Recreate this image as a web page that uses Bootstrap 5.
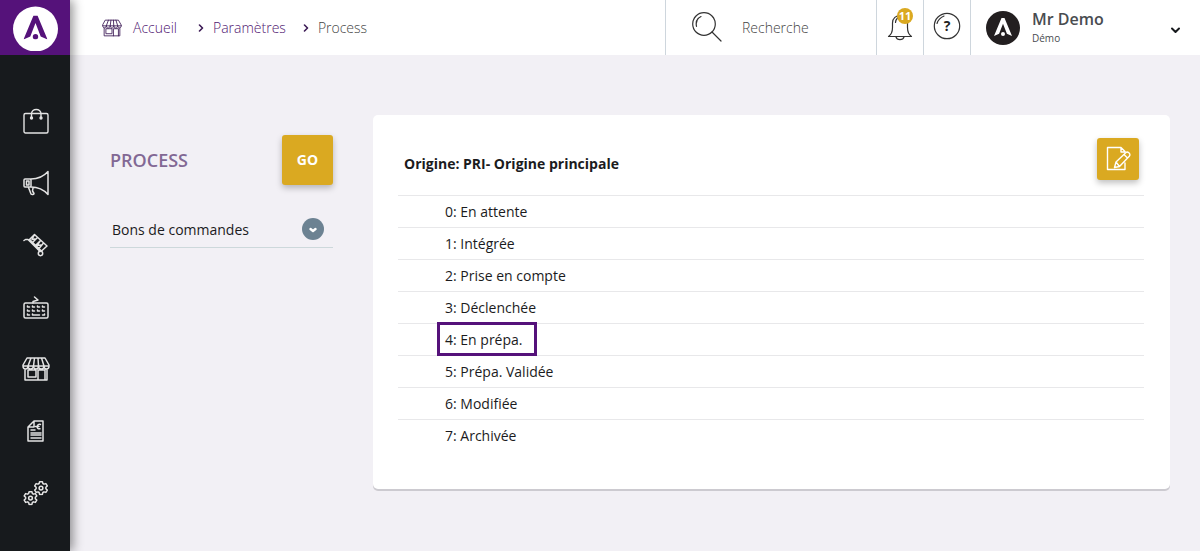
<!DOCTYPE html>
<html lang="fr">
<head>
<meta charset="utf-8">
<meta name="viewport" content="width=device-width, initial-scale=1">
<title>Process</title>
<link rel="stylesheet" href="https://cdn.jsdelivr.net/npm/bootstrap@5.3.0/dist/css/bootstrap.min.css">
<style>
  :root { --violet: #55127a; --gold: #daa921; --ink: #171a1d; --rule: #ced6dd; }
  body { font-family: "Open Sans", sans-serif; font-size: 14px; line-height: 20px; color: #1b1b1d; background: #f2f0f5; }
  svg { display: block; fill: none; stroke: currentColor; stroke-linejoin: round; stroke-linecap: round; }
  .sidebar { width: 70px; background: var(--ink); box-shadow: 3px 0 10px rgba(0,0,0,.42); z-index: 2; }
  .logo { height: 55px; background: var(--violet); color: var(--violet); }
  .menu { padding: 35px 0 0 1px; }
  .menu a { height: 62px; color: #e4e4e4; }
  .topbar { min-height: 55px; }
  .crumbs { padding-left: 32px; font-weight: 300; }
  .crumbs a { color: #4f1670; gap: 11px; }
  .crumbs svg { color: #3c1a55; }
  .crumbs .chevron { margin: 0 8px 0 20px; }
  .crumbs .chevron + .here { margin-left: -2px; }
  .crumbs .here { color: #444; }
  .searchbox { width: 211px; border-left: 1px solid var(--rule); padding-left: 24px; gap: 20px; }
  .searchbox input { font-weight: 300; color: #444; width: 100px; background: none; }
  .searchbox input::placeholder { color: #444; opacity: 1; }
  .tool { width: 47px; border: 0; border-left: 1px solid var(--rule); background: none; color: #333; padding: 0 0 4px; }
  .tally { font-size: 11px; line-height: 16px; width: 16px; height: 16px; background: var(--gold); top: 8px; left: 20px; }
  .profile { width: 230px; border: 0; border-left: 1px solid var(--rule); background: none; padding: 0 19px 0 15px; color: #494c50; }
  .profile strong { font-size: 16px; line-height: 20px; font-weight: 600; }
  .profile small { font-size: 10px; line-height: 18px; }
  .content { padding: 60px 30px 60px 40px; gap: 40px; }
  .filters { width: 223px; padding-top: 20px; }
  h1 { font-size: 18px; line-height: 24px; font-weight: 600; color: #826894; }
  .gold { background: var(--gold); color: #fff; border: 0; border-radius: 3px; box-shadow: 0 3px 6px rgba(0,0,0,.25); }
  .go { width: 51px; height: 50px; font-weight: 700; }
  .edit { width: 42px; height: 42px; padding: 0; }
  .choice { margin-top: 26px; }
  .choice select { height: 37px; width: 100%; appearance: none; border: 0; border-bottom: 1px solid #cdd8db; border-radius: 0; background: none; padding: 2px 36px 0 2px; color: inherit; }
  .choice svg { right: 9px; top: 7px; pointer-events: none; }
  .panel { border-radius: 5px; padding: 0 26px 38px 25px; box-shadow: 0 2px 0 #cccad0; min-width: 0; }
  .panel header { min-height: 80px; padding: 8px 5px 0 6px; }
  h2 { font-size: 14px; line-height: 20px; font-weight: 700; padding-top: 10px; }
  .states li { border-top: 1px solid #e8e8ea; height: 32px; padding: 6px 0 5px 47px; line-height: 20px; }
  .marker { border: 3px solid var(--violet); inset: -8px -14px -6px -8px; pointer-events: none; }
</style>
</head>
<body>
<svg width="0" height="0" class="position-absolute" aria-hidden="true">
  <symbol id="shop" viewBox="0 0 28 24">
    <path d="M5 1h18l4 7v1H1V8zM1 9c0 4 5 4 5 0 0 4 5 4 5.500 0 0 4 5 4 5 0 0 4 5.500 4 5.500 0 0 4 5 4 5 0M9 1 6 9M12.500 1l-1 8M16 1l.5 8M19.500 1 22 9M3 12v11h22V12M6 13h8v7H6zM16 23V13h7v10"/>
  </symbol>
  <symbol id="mark" viewBox="0 0 24 24">
    <path d="M10 0h4l10 24-6.800-3L12 7.500 6.800 21 0 24z" fill="currentColor" stroke="none"/>
    <circle cx="12" cy="21.300" r="2.700" fill="currentColor" stroke="none"/>
  </symbol>
  <symbol id="gear" viewBox="0 0 16 16">
    <path d="M6.500 1.200h3l.5 2 1.200.7 2-.6 1.500 2.500-1.500 1.500v1.400l1.500 1.500-1.500 2.500-2-.6-1.200.7-.5 2h-3l-.5-2-1.200-.7-2 .6-1.500-2.500 1.500-1.500V7.300L1.300 5.800l1.500-2.500 2 .6L6 3.200z"/><circle cx="8" cy="8" r="2"/>
  </symbol>
</svg>

<div class="d-flex min-vh-100">
  <nav class="sidebar flex-shrink-0 position-relative" aria-label="Menu principal">
    <a href="#" class="logo d-flex align-items-center justify-content-center" aria-label="Accueil">
      <svg width="46" height="46" viewBox="0 0 46 46"><circle cx="23.500" cy="24" r="22.500" fill="#fff" stroke="none"/><use href="#mark" x="11.500" y="10.500" width="24" height="24"/></svg>
    </a>
    <div class="menu d-flex flex-column">
      <a href="#" class="d-flex align-items-center justify-content-center" aria-label="Commandes">
        <svg width="26" height="26" viewBox="0 0 26 26" stroke-width="1.400"><rect x="1" y="5.500" width="24" height="19.500" rx="1.500"/><path d="M8.500 10V6c0-6 9.500-6 9.500 0v4"/><circle cx="8.500" cy="10" r="1" fill="currentColor"/><circle cx="18" cy="10" r="1" fill="currentColor"/></svg>
      </a>
      <a href="#" class="d-flex align-items-center justify-content-center" aria-label="Marketing">
        <svg width="28" height="26" viewBox="0 0 28 26" stroke-width="1.500"><rect x="2" y="9" width="7" height="8" rx="1"/><path d="M4.500 11h2.500v4H4.500zM9 9c7 0 13-3 17-7.500v23C22 20 16 17 9 17M6.500 17.500 9 24c1 1 3 .5 3-.5L10.500 21l.5-3"/></svg>
      </a>
      <a href="#" class="d-flex align-items-center justify-content-center" aria-label="Livraisons">
        <svg width="26" height="24" viewBox="0 0 26 24" stroke-width="1.500"><path d="M1 7.500 2.500 6.500H5L17 18.500M11.500 1.500 24 13l-5.500 5L6.500 6.500zM9.500 9.500l5-5M12.500 12.500l5-5M11.500 1.500 9 6.500l3-.5M17.500 7.500l-3.500 5 4-.5M20.500 10 16 15.500"/><circle cx="17.500" cy="20.500" r="2.200"/></svg>
      </a>
      <a href="#" class="d-flex align-items-center justify-content-center" aria-label="Saisie">
        <svg width="26" height="24" viewBox="0 0 26 24" stroke-width="1.500"><rect x="1" y="8" width="24" height="15" rx="1.500"/><path d="M10 8V6.500l5-1.500-3.500-3M4.500 11v1h2M9.500 11v1h2M14.500 11v1h2M19.500 11v1h2M4.500 15v1h2M9.500 15v1h2M14.500 15v1h2M19.500 15v1h2M4.500 19v1h2M9.500 19v1h7M19.500 20h2v-1"/></svg>
      </a>
      <a href="#" class="d-flex align-items-center justify-content-center" aria-label="Boutique">
        <svg width="28" height="24" stroke-width="1.500"><use href="#shop"/></svg>
      </a>
      <a href="#" class="d-flex align-items-center justify-content-center" aria-label="Factures">
        <svg width="18" height="22" viewBox="0 0 18 22" stroke-width="1.500"><path d="M7 1h9v20H1V7zM7 1v6H1M13.500 4.500c-3.500-1.500-5 5-.5 4.300M8.500 6.500H12M4 10h4M4 13h10M4 15h10M4 18h10"/></svg>
      </a>
      <a href="#" class="d-flex align-items-center justify-content-center" aria-label="Réglages">
        <svg width="26" height="26" viewBox="0 0 26 26" stroke-width="1.600"><use href="#gear" x="0" y="10.500" width="15" height="15"/><use href="#gear" x="10.500" y="0.500" width="15" height="15"/></svg>
      </a>
    </div>
  </nav>

  <div class="flex-grow-1 d-flex flex-column overflow-hidden">
    <header class="topbar bg-white d-flex align-items-stretch">
      <nav class="crumbs d-flex align-items-center me-auto" aria-label="Fil d’Ariane">
        <a href="#" class="text-decoration-none d-flex align-items-center"><svg width="20" height="18" stroke-width="1.200"><use href="#shop"/></svg>Accueil</a>
        <svg class="chevron" width="8" height="8" viewBox="0 0 8 8" stroke-width="1.600"><path d="m2.500 1 3 3-3 3"/></svg>
        <a href="#" class="text-decoration-none">Paramètres</a>
        <svg class="chevron ms-3" width="8" height="8" viewBox="0 0 8 8" stroke-width="1.600"><path d="m2.500 1 3 3-3 3"/></svg>
        <span class="here ms-0">Process</span>
      </nav>
      <form class="searchbox d-flex align-items-center">
        <label for="q" aria-label="Recherche"><svg width="32" height="32" viewBox="0 0 32 32" stroke-width="1.200" color="#333"><circle cx="14" cy="12" r="11.300"/><path d="m22 20 9 9M6.500 14.500C5.500 9.500 7.500 6 11 4.500"/></svg></label>
        <input id="q" type="text" class="border-0 p-0" placeholder="Recherche">
      </form>
      <button type="button" class="tool position-relative" aria-label="Notifications">
        <svg class="mx-auto" width="26" height="30" viewBox="0 0 26 30" stroke-width="1.200"><path d="M1.500 25.500c3-2 4-4.500 4-9V12c0-10 15-10 15 0v4.500c0 4.500 1 7 4 9zM9 26c1 3.500 7 3.500 8 0M8.500 11.500c0-2 .5-3 2-4.500"/></svg>
        <span class="tally position-absolute rounded-circle text-white fw-bold text-center">11</span>
      </button>
      <button type="button" class="tool" aria-label="Aide">
        <svg class="mx-auto" width="28" height="28" viewBox="0 0 28 28" stroke-width="1.200"><circle cx="14" cy="14" r="12.700"/><path d="M4 11.500c1-3.500 3.500-6 7-7.500"/><text x="14" y="19" text-anchor="middle" font-size="14" font-weight="700" fill="#222" stroke="none">?</text></svg>
      </button>
      <button type="button" class="profile d-flex align-items-center text-start">
        <svg width="34" height="34" viewBox="0 0 34 34" color="#fff"><circle cx="17" cy="17" r="17" fill="#231f20" stroke="none"/><use href="#mark" x="8" y="7" width="18" height="18"/></svg>
        <span class="d-flex flex-column flex-grow-1 ms-2 ps-1"><strong>Mr Demo</strong><small>Démo</small></span>
        <svg class="mt-1" width="12" height="8" viewBox="0 0 12 8" stroke-width="2" color="#171a1d"><path d="m3 2.500 3.500 3.500L10 2.500"/></svg>
      </button>
    </header>

    <main class="content d-flex flex-column flex-md-row align-items-start">
      <form class="filters flex-shrink-0">
        <div class="d-flex align-items-center justify-content-between">
          <h1 class="m-0">PROCESS</h1>
          <button type="button" class="gold go">GO</button>
        </div>
        <div class="choice position-relative">
          <select aria-label="Type de document"><option>Bons de commandes</option></select>
          <svg class="position-absolute" width="22" height="22" viewBox="0 0 22 22"><circle cx="11" cy="11" r="11" fill="#6c8292" stroke="none"/><path d="m8.500 11 2.500 2 2.500-2" stroke="#fff" stroke-width="2.400"/></svg>
        </div>
      </form>

      <section class="panel bg-white flex-grow-1">
        <header class="d-flex align-items-center justify-content-between">
          <h2 class="m-0">Origine: PRI- Origine principale</h2>
          <button type="button" class="gold edit" aria-label="Modifier">
            <svg class="mx-auto" width="26" height="26" viewBox="0 0 26 26" stroke-width="1.400"><path d="M20 17v6.500H2.500V1.500H16l4 4M16 1.500v4.500h3.500M9.500 21.500l1.500-5.500L21 6.500c1.500-1.500 5 1 3.500 3.500L14.500 20.500zM11 16l3.500 4.500M19 8.500l3.500 3.500"/></svg>
          </button>
        </header>
        <ul class="states list-unstyled m-0">
          <li>0: En attente</li>
          <li>1: Intégrée</li>
          <li>2: Prise en compte</li>
          <li>3: Déclenchée</li>
          <li><span class="position-relative d-inline-block">4: En prépa.<span class="marker position-absolute"></span></span></li>
          <li>5: Prépa. Validée</li>
          <li>6: Modifiée</li>
          <li>7: Archivée</li>
        </ul>
      </section>
    </main>
  </div>
</div>
<script src="https://cdn.jsdelivr.net/npm/bootstrap@5.3.0/dist/js/bootstrap.bundle.min.js"></script>
</body>
</html>
